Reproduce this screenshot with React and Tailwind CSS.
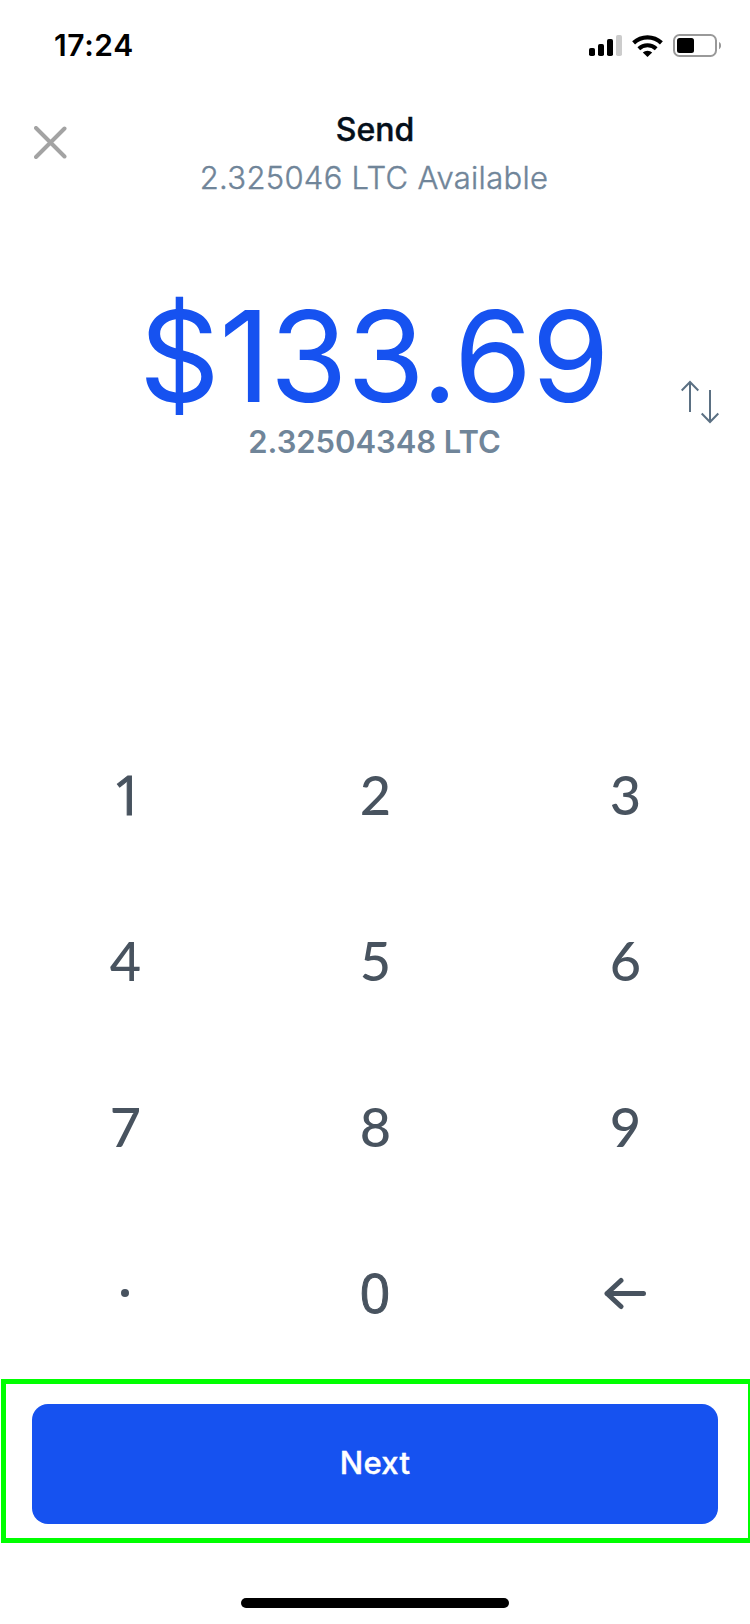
import React, { useState } from 'react';

const keys = ['1', '2', '3', '4', '5', '6', '7', '8', '9', '.', '0', 'back'];

const SignalIcon = () => (
  <svg width="33" height="21" viewBox="0 0 33 21">
    <rect x="0" y="13" width="6" height="8" rx="1.8" fill="#000" />
    <rect x="9" y="9" width="6" height="12" rx="1.8" fill="#000" />
    <rect x="18" y="4" width="6" height="17" rx="1.8" fill="#000" />
    <rect x="27" y="0" width="6" height="21" rx="1.8" fill="#ccc" />
  </svg>
);

const WifiIcon = () => (
  <svg width="31" height="22" viewBox="0 0 31 22" fill="none" stroke="#000">
    <path d="M1.6 7.9a20.3 20.3 0 0 1 27.8 0" strokeWidth="4.2" />
    <path d="M6.8 13.7a12.7 12.7 0 0 1 17.4 0" strokeWidth="4" />
    <path d="M10.8 17.6a6.8 6.8 0 0 1 9.4 0L15.5 22z" fill="#000" stroke="none" />
  </svg>
);

const BatteryIcon = () => (
  <svg width="48" height="23" viewBox="0 0 48 23">
    <rect x="1" y="1" width="42" height="21" rx="5.5" fill="none" stroke="#999" strokeWidth="2" />
    <rect x="4" y="4" width="17" height="15" rx="2.5" fill="#000" />
    <path d="M46 8c2.8 1 2.8 6.2 0 7.2z" fill="#999" />
  </svg>
);

const CloseIcon = () => (
  <svg width="33" height="33" viewBox="0 0 33 33" stroke="#a3a3a3" strokeWidth="4" strokeLinecap="round">
    <path d="M2 2l28.5 28.5M30.5 2.5L2 31" />
  </svg>
);

const SwapIcon = () => (
  <svg width="38" height="44" viewBox="0 0 38 44" fill="none" stroke="#5b7083" strokeWidth="2">
    <path d="M9 32V2M0.7 10.5L9 2l8.3 8.5" />
    <path d="M29 10v32M20.7 33.5L29 42l8.3-8.5" />
  </svg>
);

const BackIcon = () => (
  <svg width="42" height="34" viewBox="0 0 42 34" fill="none" stroke="#48535f" strokeWidth="5" strokeLinecap="round" strokeLinejoin="round">
    <path d="M39.5 17.5H3M17 4.5L3 17.5l14 13" />
  </svg>
);

const KeyLabel = ({ value }) => {
  if (value === 'back') return <BackIcon />;
  if (value === '.') return <span className="h-2 w-2 rounded-full bg-[#48535f]" />;
  // Lato's 1 has a foot and its 0 is wide, so these two use Open Sans
  if (value === '1') {
    return <span className="pb-0.5 pl-1.5 font-['Open_Sans',sans-serif] [-webkit-text-stroke:1px_#48535f]">1</span>;
  }
  if (value === '0') {
    return <span className="pb-0.5 font-['Open_Sans',sans-serif] [-webkit-text-stroke:1px_#48535f]">0</span>;
  }
  return <span className="pb-px pl-px">{value}</span>;
};

const App = () => {
  const [amount, setAmount] = useState('133.69');

  const handleKey = (key) => {
    if (key === 'back') {
      setAmount(amount.slice(0, -1) || '0');
    } else if (key !== '.' || !amount.includes('.')) {
      setAmount(amount === '0' && key !== '.' ? key : amount + key);
    }
  };

  return (
    <div className="h-[1624px] w-[750px] overflow-hidden bg-white font-['Inter',sans-serif]">
      <div className="flex h-[91px] items-center justify-between pl-[54px] pr-[29px]">
        <span className="text-[30px] font-semibold tracking-[0.6px] text-black">17:24</span>
        <div className="flex items-center gap-2.5">
          <SignalIcon />
          <WifiIcon />
          <BatteryIcon />
        </div>
      </div>

      <header className="grid grid-cols-[100px_1fr_100px] pt-[15px] text-center">
        <button className="mt-5 flex justify-center self-start" aria-label="Close">
          <CloseIcon />
        </button>
        <div>
          <h1 className="text-[32px] leading-[48px] font-medium text-[#050f1a] [-webkit-text-stroke:0.4px_#050f1a]">Send</h1>
          <p className="pr-0.5 text-[31px] leading-[47px] font-light tracking-[0.3px] text-[#708599] [-webkit-text-stroke:0.4px_#708599]">
            2.325046 LTC Available
          </p>
        </div>
      </header>

      <section className="grid grid-cols-[100px_1fr_100px] pt-[91px] text-center">
        <div className="col-start-2">
          <div className="pr-0.5 text-[126px] leading-[129px] tracking-[-0.6px] whitespace-nowrap text-[#1652f0]">${amount}</div>
          <div className="pr-px text-[31px] leading-[41px] font-semibold tracking-[-0.05px] text-[#708599]">2.32504348 LTC</div>
        </div>
        <button className="mt-[88px] flex justify-center self-start" aria-label="Swap currency">
          <SwapIcon />
        </button>
      </section>

      <div className="mt-[250px] grid grid-cols-3">
        {keys.map((key) => (
          <button
            key={key}
            onClick={() => handleKey(key)}
            className="flex h-[166px] items-center justify-center font-['Lato',sans-serif] text-[54px] font-medium text-[#48535f]"
          >
            <KeyLabel value={key} />
          </button>
        ))}
      </div>

      <div className="mt-[3px] ml-px border-5 border-r-2 border-[#00ff00] pt-5 pr-[30px] pb-3.5 pl-[26px]">
        <button className="h-[120px] w-full rounded-2xl bg-[#1652f0] pb-0.5 text-[31px] font-medium tracking-[0.3px] text-white [-webkit-text-stroke:0.4px_white]">
          Next
        </button>
      </div>

      <div className="mx-auto mt-[55px] h-2.5 w-[268px] rounded-full bg-black" />
    </div>
  );
};

export default App;
